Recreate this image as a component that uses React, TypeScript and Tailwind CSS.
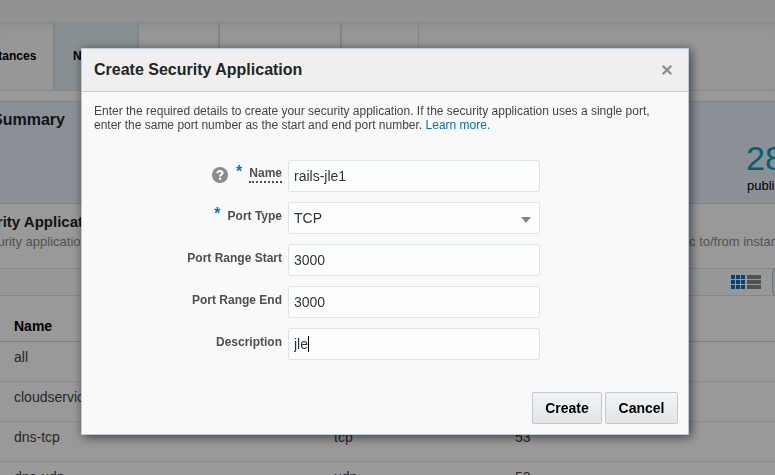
import type { ReactNode } from "react";

const tabs = [
  { label: "Instances", style: "w-[92px] border-r-2" },
  { label: "Network", style: "w-[84px] border-r-2 bg-[#e3eef5]" },
  { label: "Storage", style: "w-[81px] border-r-2" },
  { label: "Orchestrations", style: "w-[122px] border-r-2" },
  { label: "Images", style: "w-[77px] border-r" },
];

const rows = [
  { name: "all", type: "all", port: "" },
  { name: "cloudservice", type: "tcp", port: "1522" },
  { name: "dns-tcp", type: "tcp", port: "53" },
  { name: "dns-udp", type: "udp", port: "53" },
];

function Page() {
  return (
    <div className="h-screen overflow-hidden bg-white text-[#333]">
      <header className="h-[22px] bg-[#f3f3f3]" />
      <nav className="flex h-[69px] border-b border-[#e0e3e5] bg-linear-to-b from-[#efefef] to-[#fcfcfc] to-20% shadow-[inset_0_1px_1px_#e2e2e2]">
        <div className="-ml-[37px] flex text-xs font-bold text-black">
          {tabs.map((tab) => (
            <a
              key={tab.label}
              href="#"
              className={`flex shrink-0 items-center border-[#d3dce2] pl-[18px] ${tab.style}`}
            >
              {tab.label}
            </a>
          ))}
        </div>
      </nav>
      <section className="mt-[10px] flex h-[103px] justify-between border-y border-[#cfdce8] bg-[#e8f0fb]">
        <h2 className="-ml-2 pt-[6px] text-base font-bold text-[#222]">Summary</h2>
        <div className="-mr-10 w-[68px] pt-9 text-black">
          <div className="-ml-px text-[34px] leading-[40px] text-[#00a3b4]">28</div>
          <div className="text-[13px] leading-4 whitespace-nowrap">public IPs</div>
        </div>
      </section>
      <section className="pt-2">
        <h3 className="-ml-[39px] text-[15px] leading-5 font-bold text-[#222]">Security Applications</h3>
        <p className="-ml-[25px] flex justify-between text-[13px] leading-5 whitespace-nowrap text-[#8a8a8a]">
          <span>Security applications define the protocol and ports</span>
          <span className="w-[111px]">traffic to/from instances.</span>
        </p>
      </section>
      <div className="mt-4 flex h-7 items-center justify-end border-y border-[#e2e4e4] bg-[#fcfefd]">
        <svg width="30" height="14" viewBox="0 0 30 14" className="mr-[11px]" aria-hidden="true">
          {[0, 5, 10].map((y) => (
            <g key={y}>
              {[0, 5, 10].map((x) => (
                <rect key={x} x={x} y={y} width="4" height="4" fill="#0b6dc4" />
              ))}
              <rect x="16" y={y} width="14" height="4" fill="#83898c" />
            </g>
          ))}
        </svg>
        <button aria-label="Actions" className="-mr-7 h-7 w-[31px] shrink-0 rounded-sm border border-[#b9c4cb] bg-[#eceff1]" />
      </div>
      <table className="w-full table-fixed border-collapse text-left text-sm text-[#444]">
        <thead>
          <tr className="h-[45px] border-b border-[#d6d6d6] text-black">
            <th className="w-[320px] pt-4 pl-[14px]">Name</th>
            <th className="w-[182px] pt-4 pl-[14px]">Port Type</th>
            <th className="pt-4 pl-[13px]">Port Range</th>
          </tr>
        </thead>
        <tbody>
          {rows.map((row) => (
            <tr key={row.name} className="h-10 border-b border-[#ebebeb]">
              <td className="pb-2 pl-[14px]">{row.name}</td>
              <td className="pb-2 pl-[14px]">{row.type}</td>
              <td className="pb-2 pl-[13px]">{row.port}</td>
            </tr>
          ))}
        </tbody>
      </table>
    </div>
  );
}

const control =
  "h-8 w-full rounded-[2px] border border-[#dfe4e7] bg-[#fcfdfe] px-[5px] text-sm text-[#333] outline-none";

function Required() {
  return (
    <span aria-hidden="true" className="mr-[7px] mb-1 text-base leading-4 text-[#0572ce]">
      *
    </span>
  );
}

function Field({
  id,
  label,
  required,
  help,
  children,
}: {
  id: string;
  label: string;
  required?: boolean;
  help?: boolean;
  children: ReactNode;
}) {
  return (
    <div className="flex gap-[6px]">
      <div className="flex h-7 w-[188px] items-center justify-end text-xs font-bold text-[#4f4f4f]">
        {help && (
          <button type="button" aria-label="Help" className="mt-[2px] mr-2">
            <svg width="16" height="16" viewBox="0 0 16 16" aria-hidden="true">
              <circle cx="8" cy="8" r="8" fill="#868c8f" />
              <path
                d="M5.4 6.3c0-1.5 1.1-2.3 2.6-2.3s2.5.8 2.5 2c0 1.8-2.4 1.6-2.4 3.4"
                fill="none"
                stroke="#fff"
                strokeWidth="2.1"
              />
              <rect x="7" y="10.6" width="2.2" height="2.2" fill="#fff" />
            </svg>
          </button>
        )}
        {required && <Required />}
        <label
          htmlFor={id}
          className={help ? "border-b-2 border-dotted border-[#4f4f4f] leading-4" : "leading-4"}
        >
          {label}
        </label>
      </div>
      <div className="relative w-[252px]">{children}</div>
    </div>
  );
}

export default function App() {
  return (
    <div className="font-['Liberation_Sans',Arial,sans-serif]">
      <Page />
      <div className="fixed inset-0 flex items-start justify-center bg-black/40 pt-12 pr-[5px]">
        <form
          role="dialog"
          aria-labelledby="dialog-title"
          onSubmit={(e) => e.preventDefault()}
          className="w-full max-w-[608px] border border-[#bdcbd6] bg-[#f9f9f9] shadow-[2px_2px_10px_rgba(0,0,0,0.6)]"
        >
          <div className="flex h-[43px] items-center justify-between border-b border-[#bdcbd6] bg-[#efefef] pr-4 pl-3">
            <h1 id="dialog-title" className="text-base font-bold text-[#252525]">
              Create Security Application
            </h1>
            <button type="button" aria-label="Close">
              <svg width="10" height="10" viewBox="0 0 10 10" aria-hidden="true">
                <path d="M.8.8l8.4 8.4M9.2.8L.8 9.2" stroke="#8a9094" strokeWidth="2.3" />
              </svg>
            </button>
          </div>
          <p className="px-3 pt-3 text-xs leading-[14px] text-[#444]">
            Enter the required details to create your security application. If the security application uses a single
            port, enter the same port number as the start and end port number.{" "}
            <a href="#" className="text-[#0a6ebd]">
              Learn more.
            </a>
          </p>
          <div className="mt-7 flex flex-col gap-[10px] pl-3">
            <Field id="name" label="Name" required help>
              <input id="name" defaultValue="rails-jle1" className={control} />
            </Field>
            <Field id="type" label="Port Type" required>
              <select id="type" defaultValue="TCP" className={`${control} appearance-none`}>
                <option>TCP</option>
                <option>UDP</option>
              </select>
              <svg
                width="10"
                height="6"
                viewBox="0 0 10 6"
                className="pointer-events-none absolute top-[15px] right-[9px]"
                aria-hidden="true"
              >
                <path d="M0 0h10L5 6z" fill="#858585" />
              </svg>
            </Field>
            <Field id="start" label="Port Range Start">
              <input id="start" defaultValue="3000" className={control} />
            </Field>
            <Field id="end" label="Port Range End">
              <input id="end" defaultValue="3000" className={control} />
            </Field>
            <Field id="description" label="Description">
              <input id="description" defaultValue="jle" className={control} />
              <span className="absolute top-2 left-5 h-4 w-px bg-black" />
            </Field>
          </div>
          <div className="mt-8 flex justify-end gap-[3px] pr-[10px] pb-[10px] text-sm font-bold text-black">
            <button
              type="submit"
              className="h-8 min-w-[70px] rounded-[2px] border border-[#bccad5] bg-linear-to-b from-[#f2f3f4] to-[#e2e6e9] px-[11px]"
            >
              Create
            </button>
            <button
              type="button"
              className="h-8 min-w-[73px] rounded-[2px] border border-[#bccad5] bg-linear-to-b from-[#f2f3f4] to-[#e2e6e9] px-[11px]"
            >
              Cancel
            </button>
          </div>
        </form>
      </div>
    </div>
  );
}
